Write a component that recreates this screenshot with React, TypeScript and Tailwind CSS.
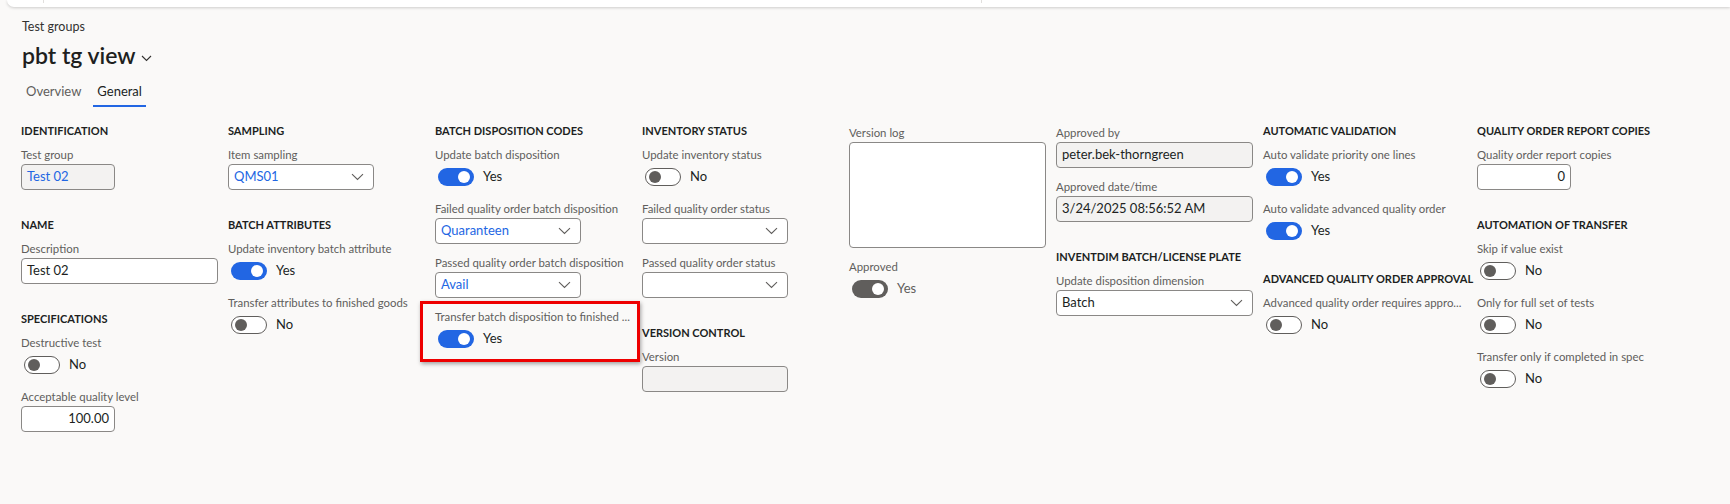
import React from 'react';

type ToggleState = 'on' | 'off' | 'locked';

function Heading({ children, first }: { children: React.ReactNode; first?: boolean }) {
  return (
    <div
      className={`${first ? '' : 'mt-[15px]'} mb-[5px] h-[20px] whitespace-nowrap text-[11px] font-bold leading-[20px] text-[#201f1e]`}
    >
      {children}
    </div>
  );
}

function Field({ label, children }: { label: string; children: React.ReactNode }) {
  return (
    <div className="mb-[10px]">
      <div className="h-[18px] whitespace-nowrap text-[11.4px] leading-[18px] text-[#605e5c]">{label}</div>
      {children}
    </div>
  );
}

function Chevron() {
  return (
    <svg width="13" height="8" viewBox="0 0 13 8" className="shrink-0">
      <path d="M1 1.2 L6.5 6.5 L12 1.2" fill="none" stroke="#605e5c" strokeWidth="1.1" />
    </svg>
  );
}

function TextBox({
  value,
  width,
  locked,
  link,
  right,
}: {
  value?: string;
  width: string;
  locked?: boolean;
  link?: boolean;
  right?: boolean;
}) {
  return (
    <div
      className={`flex h-[26px] items-center rounded-[4px] border border-[#8a8886] px-[5px] text-[13px] ${width} ${
        locked ? 'bg-[#f3f2f1]' : 'bg-white'
      } ${right ? 'justify-end' : ''} ${link ? 'text-[#2266e3]' : 'text-[#201f1e]'}`}
    >
      {value}
    </div>
  );
}

function Select({ value, width, link }: { value?: string; width: string; link?: boolean }) {
  return (
    <div
      className={`flex h-[26px] items-center justify-between rounded-[4px] border border-[#8a8886] bg-white pl-[5px] pr-[9px] text-[13px] ${width} ${
        link ? 'text-[#2266e3]' : 'text-[#201f1e]'
      }`}
    >
      <span>{value}</span>
      <Chevron />
    </div>
  );
}

function Toggle({ state }: { state: ToggleState }) {
  const on = state !== 'off';
  return (
    <div className="flex h-[26px] items-center pl-[3px]">
      {state === 'on' && (
        <div className="flex h-[18px] w-[36px] items-center justify-end rounded-full bg-[#2266e3] pr-[4px]">
          <div className="h-[12px] w-[12px] rounded-full bg-white" />
        </div>
      )}
      {state === 'locked' && (
        <div className="flex h-[18px] w-[36px] items-center justify-end rounded-full bg-[#605e5c] pr-[4px]">
          <div className="h-[12px] w-[12px] rounded-full bg-white" />
        </div>
      )}
      {state === 'off' && (
        <div className="flex h-[18px] w-[36px] items-center rounded-full border border-[#605e5c] bg-white pl-[3px]">
          <div className="h-[12px] w-[12px] rounded-full bg-[#605e5c]" />
        </div>
      )}
      <span
        className={`ml-[9px] text-[13px] ${state === 'locked' ? 'text-[#605e5c]' : 'text-[#201f1e]'}`}
      >
        {on ? 'Yes' : 'No'}
      </span>
    </div>
  );
}

export default function App() {
  return (
    <div className="h-[504px] w-[1730px] overflow-hidden bg-[#faf9f8] font-['Lato',sans-serif]">
      {/* top command bar edge */}
      <div className="ml-[7px] flex h-[7px] rounded-bl-[8px] bg-white shadow-[0_1px_3px_rgba(0,0,0,0.18)]">
        <div className="ml-[36px] h-[3px] w-px bg-[#e1dfdd]" />
        <div className="ml-[937px] h-[3px] w-px bg-[#e1dfdd]" />
      </div>

      {/* page header */}
      <div className="px-[22px] pt-[11px]">
        <div className="text-[12.5px] leading-[18px] text-[#323130]">Test groups</div>
        <div className="mt-[4px] flex h-[30px] items-center">
          <span className="text-[23px] font-semibold leading-[30px] text-[#201f1e]">pbt tg view</span>
          <svg width="11" height="7" viewBox="0 0 11 7" className="ml-[5px] mt-[6px]">
            <path d="M1 1 L5.5 5.5 L10 1" fill="none" stroke="#323130" strokeWidth="1.1" />
          </svg>
        </div>
        <div className="mt-[9px] flex h-[28px] gap-[8px]">
          <div className="flex items-center border-b-2 border-transparent px-[4px] text-[13px] text-[#605e5c]">
            Overview
          </div>
          <div className="flex items-center border-b-2 border-[#2266e3] px-[4px] text-[13px] text-[#201f1e]">
            General
          </div>
        </div>
      </div>

      {/* form columns */}
      <div className="mt-[14px] flex pl-[21px]">
        <div className="flex w-[207px] shrink-0 flex-col">
          <Heading first>IDENTIFICATION</Heading>
          <Field label="Test group">
            <TextBox value="Test 02" width="w-[94px]" locked link />
          </Field>
          <Heading>NAME</Heading>
          <Field label="Description">
            <TextBox value="Test 02" width="w-[197px]" />
          </Field>
          <Heading>SPECIFICATIONS</Heading>
          <Field label="Destructive test">
            <Toggle state="off" />
          </Field>
          <Field label="Acceptable quality level">
            <TextBox value="100.00" width="w-[94px]" right />
          </Field>
        </div>

        <div className="flex w-[207px] shrink-0 flex-col">
          <Heading first>SAMPLING</Heading>
          <Field label="Item sampling">
            <Select value="QMS01" width="w-[146px]" link />
          </Field>
          <Heading>BATCH ATTRIBUTES</Heading>
          <Field label="Update inventory batch attribute">
            <Toggle state="on" />
          </Field>
          <Field label="Transfer attributes to finished goods">
            <Toggle state="off" />
          </Field>
        </div>

        <div className="flex w-[207px] shrink-0 flex-col">
          <Heading first>BATCH DISPOSITION CODES</Heading>
          <Field label="Update batch disposition">
            <Toggle state="on" />
          </Field>
          <Field label="Failed quality order batch disposition">
            <Select value="Quaranteen" width="w-[146px]" link />
          </Field>
          <Field label="Passed quality order batch disposition">
            <Select value="Avail" width="w-[146px]" link />
          </Field>
          <div className="relative">
            <div className="absolute -left-[15px] -top-[7px] h-[61px] w-[220px] border-[3px] border-[#ee0000] shadow-[1px_2px_4px_rgba(0,0,0,0.35)]" />
            <Field label="Transfer batch disposition to finished ...">
              <Toggle state="on" />
            </Field>
          </div>
        </div>

        <div className="flex w-[207px] shrink-0 flex-col">
          <Heading first>INVENTORY STATUS</Heading>
          <Field label="Update inventory status">
            <Toggle state="off" />
          </Field>
          <Field label="Failed quality order status">
            <Select width="w-[146px]" />
          </Field>
          <Field label="Passed quality order status">
            <Select width="w-[146px]" />
          </Field>
          <Heading>VERSION CONTROL</Heading>
          <Field label="Version">
            <TextBox width="w-[146px]" locked />
          </Field>
        </div>

        <div className="flex w-[207px] shrink-0 flex-col pt-[3px]">
          <Field label="Version log">
            <div className="h-[106px] w-[197px] rounded-[4px] border border-[#8a8886] bg-white" />
          </Field>
          <Field label="Approved">
            <Toggle state="locked" />
          </Field>
        </div>

        <div className="flex w-[207px] shrink-0 flex-col pt-[3px]">
          <Field label="Approved by">
            <TextBox value="peter.bek-thorngreen" width="w-[197px]" locked />
          </Field>
          <Field label="Approved date/time">
            <TextBox value="3/24/2025 08:56:52 AM" width="w-[197px]" locked />
          </Field>
          <Heading>INVENTDIM BATCH/LICENSE PLATE</Heading>
          <Field label="Update disposition dimension">
            <Select value="Batch" width="w-[197px]" />
          </Field>
        </div>

        <div className="flex w-[214px] shrink-0 flex-col">
          <Heading first>AUTOMATIC VALIDATION</Heading>
          <Field label="Auto validate priority one lines">
            <Toggle state="on" />
          </Field>
          <Field label="Auto validate advanced quality order">
            <Toggle state="on" />
          </Field>
          <Heading>ADVANCED QUALITY ORDER APPROVAL</Heading>
          <Field label="Advanced quality order requires appro...">
            <Toggle state="off" />
          </Field>
        </div>

        <div className="flex w-[207px] shrink-0 flex-col">
          <Heading first>QUALITY ORDER REPORT COPIES</Heading>
          <Field label="Quality order report copies">
            <TextBox value="0" width="w-[94px]" right />
          </Field>
          <Heading>AUTOMATION OF TRANSFER</Heading>
          <Field label="Skip if value exist">
            <Toggle state="off" />
          </Field>
          <Field label="Only for full set of tests">
            <Toggle state="off" />
          </Field>
          <Field label="Transfer only if completed in spec">
            <Toggle state="off" />
          </Field>
        </div>
      </div>
    </div>
  );
}
